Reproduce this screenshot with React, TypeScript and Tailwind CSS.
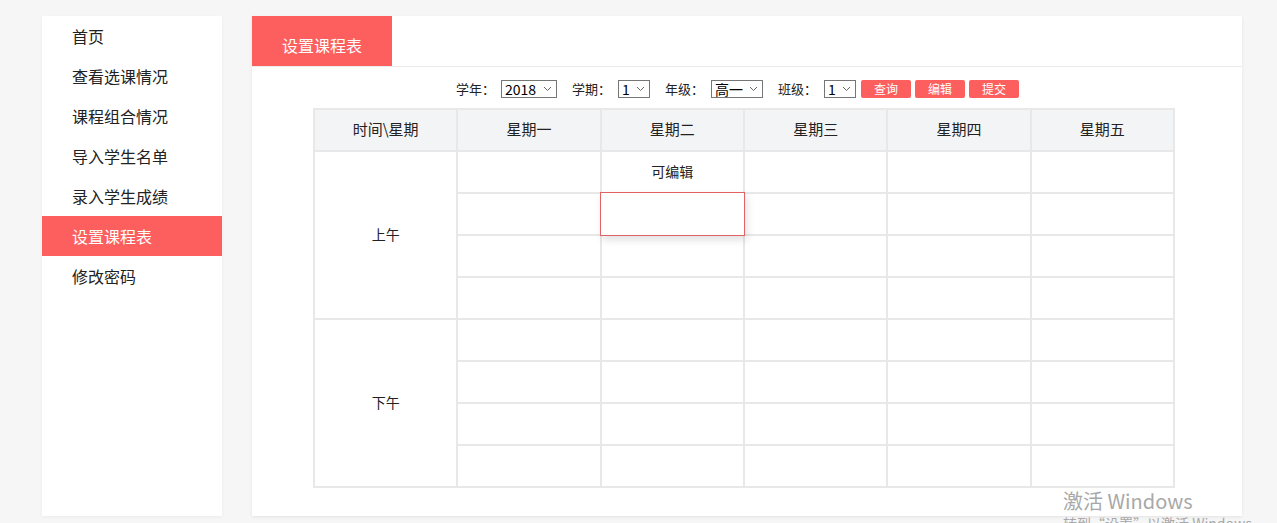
const menu = ["首页", "查看选课情况", "课程组合情况", "导入学生名单", "录入学生成绩", "设置课程表", "修改密码"]
const days = ["星期一", "星期二", "星期三", "星期四", "星期五"]

const Chevron = () => (
  <svg width="9" height="6" viewBox="0 0 9 6" className="ml-auto">
    <path d="M1 1l3.5 3.5L8 1" fill="none" stroke="#666" strokeWidth="1" />
  </svg>
)

const Select = ({ value, w }: { value: string; w: string }) => (
  <div className={`flex h-[18px] items-center border border-[#767676] bg-white pl-[3px] pr-[4px] text-[14px] leading-none text-black ${w}`}>
    <span>{value}</span>
    <Chevron />
  </div>
)

const Btn = ({ label }: { label: string }) => (
  <button className="flex h-[18px] w-[50px] items-center justify-center rounded-[2px] bg-[#fd5e5e] text-[12px] leading-none text-white">
    {label}
  </button>
)

const Half = ({ label, first }: { label: string; first?: boolean }) => (
  <>
    {[0, 1, 2, 3].map((r) => (
      <tr key={label + r} className="h-[42px]">
        {r === 0 && (
          <td rowSpan={4} className="border-2 border-[#e8e8e8] text-center text-[14px] text-[#222]">
            {label}
          </td>
        )}
        {days.map((d, c) => (
          <td key={d} className="relative border-2 border-[#e8e8e8] text-center text-[14px] text-[#222]">
            {first && r === 0 && c === 1 && "可编辑"}
            {first && r === 1 && c === 1 && (
              <div className="absolute -inset-[2px] z-10 border border-[#e06262] bg-white shadow-[2px_4px_8px_rgba(0,0,0,0.12)]" />
            )}
          </td>
        ))}
      </tr>
    ))}
  </>
)

export default function App() {
  return (
    <div className="relative flex h-[523px] gap-[30px] overflow-hidden bg-[#f6f6f6] pl-[42px] pt-[16px] font-['Microsoft_YaHei','Noto_Sans_CJK_SC',sans-serif] text-[#222]">
      {/* Sidebar */}
      <div className="h-[500px] w-[180px] bg-white shadow-[0_1px_3px_rgba(0,0,0,0.05)]">
        {menu.map((m) => (
          <div
            key={m}
            className={`flex h-[40px] items-center pl-[30px] pb-[1px] text-[16px] ${m === "设置课程表" ? "bg-[#fd5e5e] text-white" : "text-[#222]"}`}
          >
            {m}
          </div>
        ))}
      </div>

      {/* Main */}
      <div className="h-[500px] w-[990px] bg-white shadow-[0_1px_3px_rgba(0,0,0,0.08)]">
        <div className="flex h-[51px] border-b border-[#ebebeb]">
          <div className="flex h-[50px] w-[140px] items-end justify-center bg-[#fd5e5e] pb-[9px] text-[16px] text-white">
            设置课程表
          </div>
        </div>

        <div className="mt-[12px] flex items-center pl-[204px] text-[13px] text-[#222]">
          <span className="mr-[6px]">学年：</span>
          <Select value="2018" w="w-[56px]" />
          <span className="ml-[15px] mr-[7px]">学期：</span>
          <Select value="1" w="w-[32px]" />
          <span className="ml-[15px] mr-[7px]">年级：</span>
          <Select value="高一" w="w-[52px]" />
          <span className="ml-[15px] mr-[7px]">班级：</span>
          <Select value="1" w="w-[32px]" />
          <div className="ml-[5px] flex gap-[4px]">
            <Btn label="查询" />
            <Btn label="编辑" />
            <Btn label="提交" />
          </div>
        </div>

        <table className="ml-[61px] mt-[9px] w-[862px] table-fixed border-collapse border-2 border-[#e8e8e8]">
          <thead>
            <tr className="h-[42px] bg-[#f3f4f6]">
              <th className="border-2 border-[#e8e8e8] text-[15px] font-normal text-[#222]">时间\星期</th>
              {days.map((d) => (
                <th key={d} className="border-2 border-[#e8e8e8] text-[15px] font-normal text-[#222]">
                  {d}
                </th>
              ))}
            </tr>
          </thead>
          <tbody>
            <Half label="上午" first />
            <Half label="下午" />
          </tbody>
        </table>
      </div>

      {/* Windows activation watermark */}
      <div className="pointer-events-none absolute left-[1063px] top-[488px] text-[#a8a8a8]">
        <div className="text-[20px] leading-[26px]">激活 Windows</div>
        <div className="text-[14px] leading-[18px]">转到“设置”以激活 Windows。</div>
      </div>
    </div>
  )
}
